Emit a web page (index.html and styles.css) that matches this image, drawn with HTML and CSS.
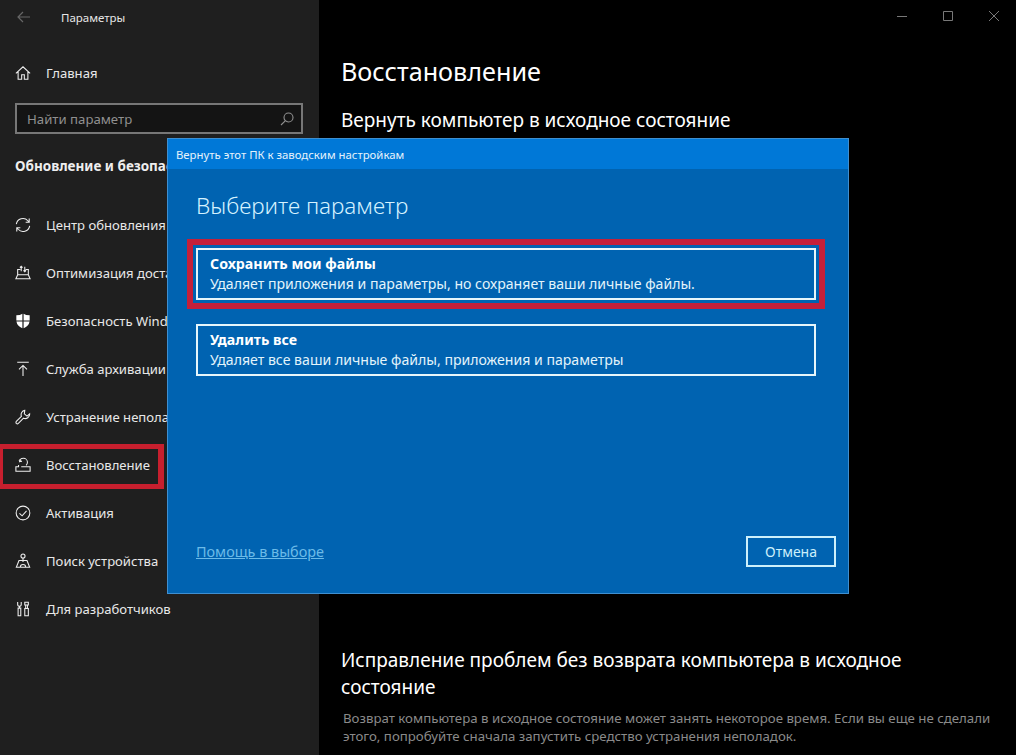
FILE: index.html
```html
<!DOCTYPE html>
<html lang="ru">
<head>
    <meta charset="UTF-8">
    <meta name="viewport" content="width=device-width, initial-scale=1.0">
    <title>Параметры</title>
    <link rel="stylesheet" href="styles.css">
</head>
<body>
    <div class="window">
        <aside class="sidebar">
            <div class="titlebar">
                <svg class="back" width="14" height="12" viewBox="0 0 14 12"><path d="M13 6H1M6 1L1 6l5 5"/></svg>
                <span class="app-name">Параметры</span>
            </div>
            <div class="nav-item home">
                <svg class="icon" viewBox="0 0 18 18"><path d="M1 9.5L9 2l8 7.5M3.5 7.5V16h4v-5h3v5h4V7.5"/></svg>
                <span>Главная</span>
            </div>
            <div class="search">
                <span>Найти параметр</span>
                <svg width="14" height="14" viewBox="0 0 14 14"><circle cx="8.5" cy="5.5" r="4.5"/><path d="M5.2 8.8L1 13"/></svg>
            </div>
            <div class="section-title">Обновление и безопасность</div>
            <nav class="nav">
                <div class="nav-item">
                    <svg class="icon" viewBox="0 0 18 18"><path d="M1.5 8a7.5 7.5 0 0 1 13-3.8L15.8 5.8M16.5 10a7.5 7.5 0 0 1-13 3.8L2.2 12.2M16 1.8V6h-4M2 16.2V12h4"/></svg>
                    <span>Центр обновления Windows</span>
                </div>
                <div class="nav-item">
                    <svg class="icon" viewBox="0 0 18 18"><path d="M3 11V5h3M15 11V5h-3M1 15.5h16L15 11H3zM7 7V1.5M5.5 3L7 1.5 8.5 3M11 2v5.5M9.5 6L11 7.5 12.5 6"/></svg>
                    <span>Оптимизация доставки</span>
                </div>
                <div class="nav-item">
                    <svg class="icon solid" viewBox="0 0 18 18"><path d="M1.5 2.5Q6 2.5 8.3.8V8.3H1.5zM9.7.8Q12 2.5 16.5 2.5V8.3H9.7zM1.6 9.7H8.3V17.2Q2.5 15 1.6 9.7zM9.7 9.7H16.4Q15.5 15 9.7 17.2z"/></svg>
                    <span>Безопасность Windows</span>
                </div>
                <div class="nav-item">
                    <svg class="icon" viewBox="0 0 18 18"><path d="M2.5 1.5h13M9 17V5M4.5 9.5L9 5l4.5 4.5"/></svg>
                    <span>Служба архивации</span>
                </div>
                <div class="nav-item">
                    <svg class="icon" viewBox="0 0 18 18"><path d="M11 1.5a5 5 0 0 0-3.8 6.7L1.5 14a1.8 1.8 0 0 0 0 2.2 1.8 1.8 0 0 0 2.3 0l5.8-5.8A5 5 0 0 0 16.5 5.5l-3 2.5-3-2.5z"/></svg>
                    <span>Устранение неполадок</span>
                </div>
                <div class="nav-item marked">
                    <svg class="icon" viewBox="0 0 18 18"><path d="M5 6a4.5 4.5 0 1 1 9 0c0 1.5-.5 2.5-1.5 3.5M7.5 1.5L5 3.5l2.8 1.5M4 9v2H1v5h16v-5H7"/></svg>
                    <span>Восстановление</span>
                </div>
                <div class="nav-item">
                    <svg class="icon" viewBox="0 0 18 18"><circle cx="9" cy="9" r="7.7"/><path d="M5 9.5l3 2.7 5-5.500"/></svg>
                    <span>Активация</span>
                </div>
                <div class="nav-item">
                    <svg class="icon" viewBox="0 0 18 18"><circle cx="9" cy="3.5" r="2.3"/><path d="M9 6v4M4.5 8.5h9L16.5 16H1.5zM6 16a3 3 0 0 1 6 0"/></svg>
                    <span>Поиск устройства</span>
                </div>
                <div class="nav-item">
                    <svg class="icon" viewBox="0 0 18 18"><path d="M3 1v3a2 2 0 0 0 4 0V1M5 6v2M3.5 8h3v8.5h-3zM11 1.5h4v3h-4zM12 4.5v4M14 4.5v4M11 8.5h4v8h-4z"/></svg>
                    <span>Для разработчиков</span>
                </div>
            </nav>
        </aside>

        <main class="content">
            <div class="window-controls">
                <svg width="12" height="12" viewBox="0 0 12 12"><path d="M1 6.5h10"/></svg>
                <svg width="12" height="12" viewBox="0 0 12 12"><path d="M1.5 1.5h9v9h-9z"/></svg>
                <svg width="12" height="12" viewBox="0 0 12 12"><path d="M1 1l10 10M11 1L1 11"/></svg>
            </div>
            <h1>Восстановление</h1>
            <h2>Вернуть компьютер в исходное состояние</h2>
            <section class="fix">
                <h3>Исправление проблем без возврата компьютера в исходное состояние</h3>
                <p>Возврат компьютера в исходное состояние может занять некоторое время. Если вы еще не сделали этого, попробуйте сначала запустить средство устранения неполадок.</p>
            </section>
        </main>

        <div class="dialog">
            <div class="dialog-title">Вернуть этот ПК к заводским настройкам</div>
            <div class="dialog-body">
                <div class="dialog-heading">Выберите параметр</div>
                <div class="option outlined">
                    <strong>Сохранить мои файлы</strong>
                    <span>Удаляет приложения и параметры, но сохраняет ваши личные файлы.</span>
                </div>
                <div class="option">
                    <strong>Удалить все</strong>
                    <span>Удаляет все ваши личные файлы, приложения и параметры</span>
                </div>
                <div class="dialog-footer">
                    <a class="help" href="#">Помощь в выборе</a>
                    <div class="cancel">Отмена</div>
                </div>
            </div>
        </div>
    </div>
</body>
</html>
```

FILE: styles.css
```css
*, *::after {
    box-sizing: border-box;
}
html, body {
    margin: 0;
    height: 100%;
    overflow: hidden;
}
body {
    font-family: "Noto Sans", "Open Sans", sans-serif;
    background: #000;
    color: #fff;
}
.window {
    position: relative;
    display: flex;
    width: 1016px;
    height: 755px;
    overflow: hidden;
}

/* left column */
.sidebar {
    width: 319px;
    flex-shrink: 0;
    background: #1f1f1f;
}
.titlebar {
    display: flex;
    align-items: center;
    height: 34px;
    padding-left: 17px;
}
.back {
    fill: none;
    stroke: #666;
    stroke-width: 1.2;
}
.app-name {
    margin-left: 30px;
    font-size: 11.5px;
    color: #e6e6e6;
}
.nav-item {
    position: relative;
    display: flex;
    align-items: center;
    height: 48px;
    padding-left: 15px;
    font-size: 13.1px;
    color: #e8e8e8;
    white-space: nowrap;
}
.nav-item span {
    margin-left: 15px;
}
.home {
    margin-top: 15px;
}
.icon {
    width: 16px;
    height: 16px;
    flex-shrink: 0;
    fill: none;
    stroke: #eee;
    stroke-width: 1.2;
}
.icon.solid {
    fill: #fff;
    stroke: none;
}
.search {
    display: flex;
    align-items: center;
    justify-content: space-between;
    width: 288px;
    height: 31px;
    margin: 6px 0 0 15px;
    padding: 0 7px 0 10px;
    border: 2px solid #777;
    background: #141414;
    font-size: 13.2px;
    color: #909090;
}
.search svg {
    fill: none;
    stroke: #909090;
    stroke-width: 1.1;
}
.section-title {
    margin: 22px 0 0 15px;
    height: 20px;
    line-height: 20px;
    font-size: 13.5px;
    font-weight: 700;
    color: #eee;
    white-space: nowrap;
}
.nav {
    margin-top: 25px;
}
.marked::after {
    content: "";
    position: absolute;
    left: 0;
    top: 3px;
    width: 164px;
    height: 45px;
    border: 5px solid #c71f2e;
    border-left-width: 3px;
    border-right-width: 6px;
}

/* right part */
.content {
    position: relative;
    flex: 1;
    padding: 52px 0 0 22px;
}
.window-controls {
    position: absolute;
    top: 10px;
    right: 16px;
    display: flex;
    gap: 34px;
}
.window-controls svg {
    fill: none;
    stroke: #787878;
    stroke-width: 1;
}
h1 {
    margin: 0;
    font-size: 25.2px;
    font-weight: 400;
    line-height: 38px;
}
h2 {
    margin: 17px 0 0;
    font-size: 19px;
    font-weight: 400;
    line-height: 26px;
}
.fix {
    width: 640px;
    margin-top: 514px;
}
h3 {
    margin: 0;
    font-size: 19px;
    font-weight: 400;
    line-height: 27px;
}
.fix p {
    width: 660px;
    margin: 8px 0 0 2px;
    font-size: 13.25px;
    line-height: 18px;
    color: #8a8a8a;
}

/* dialog over the page */
.dialog {
    position: absolute;
    left: 167px;
    top: 138px;
    width: 682px;
    height: 456px;
    display: flex;
    flex-direction: column;
    border: 1px solid #3f8fd0;
    background: #0063b1;
}
.dialog-title {
    height: 30px;
    line-height: 31px;
    padding-left: 8px;
    background: #0078d7;
    font-size: 11.35px;
    color: #e4f2fb;
}
.dialog-body {
    flex: 1;
    display: flex;
    flex-direction: column;
    padding: 20px 12px 26px 28px;
}
.dialog-heading {
    font-size: 22.5px;
    font-weight: 300;
    line-height: 34px;
    color: #d5f2ff;
}
.option {
    display: flex;
    flex-direction: column;
    justify-content: center;
    width: 620px;
    height: 52px;
    margin: 25px 0 0;
    padding: 0 12px;
    border: 2px solid #e6f6fb;
    font-size: 14.1px;
    line-height: 20px;
    color: #e3f4fb;
}
.option strong {
    font-size: 14.2px;
    color: #fff;
}
.outlined {
    outline: 6px solid #c4203a;
    outline-offset: 3px;
}
.option + .option {
    margin-top: 24px;
}
.dialog-footer {
    display: flex;
    align-items: center;
    justify-content: space-between;
    margin-top: auto;
}
.help {
    font-size: 14.4px;
    color: #6cbbe8;
}
.cancel {
    width: 90px;
    height: 31px;
    line-height: 28px;
    text-align: center;
    border: 2px solid #cdf0fb;
    font-size: 14px;
    color: #cdf0fb;
}
```
